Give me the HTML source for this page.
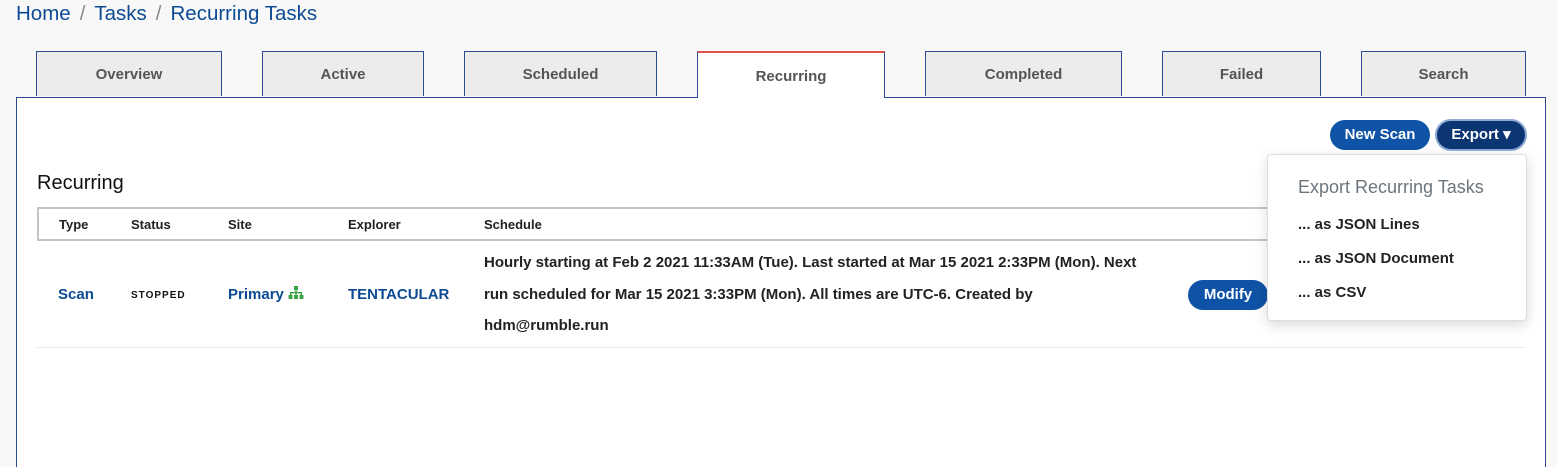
<!DOCTYPE html>
<html><head><style>
html,body{margin:0;width:1557px;height:467px;overflow:hidden}
body{background:#f8f8f8;font-family:"Liberation Sans",sans-serif;position:relative}
.a{position:absolute}
.bc{left:16px;top:2px;font-size:20.5px;color:#0d4a94}
.bc span{color:#888;margin:0 9px}
.tab{position:absolute;top:51px;height:45px;background:#ececec;border:1px solid #2c4b93;border-bottom:none;box-sizing:border-box;font-size:15px;font-weight:bold;color:#555;text-align:center;line-height:46px}
.panel{left:16px;top:97px;width:1530px;height:380px;background:#fff;border:1px solid #2c4b93;box-sizing:border-box}
.btn{position:absolute;border-radius:16px;color:#fff;font-weight:bold;font-size:15px;text-align:center;line-height:30px;height:30px}
.th{position:absolute;top:217px;font-size:13px;font-weight:bold;color:#222}
.td{position:absolute;font-size:14px;font-weight:bold}
</style></head><body>
<div class="a bc">Home<span>/</span>Tasks<span>/</span>Recurring Tasks</div>
<div class="a panel"></div>
<div class="tab" style="left:36px;width:186px">Overview</div>
<div class="tab" style="left:262px;width:162px">Active</div>
<div class="tab" style="left:464px;width:193px">Scheduled</div>
<div class="tab" style="left:697px;width:188px;height:47px;background:#fff;border-top:2px solid #e0524a;border-color:#e0524a #2c4b93 #fff #2c4b93;line-height:48px">Recurring</div>
<div class="tab" style="left:925px;width:197px">Completed</div>
<div class="tab" style="left:1162px;width:159px">Failed</div>
<div class="tab" style="left:1361px;width:165px">Search</div>
<div class="btn" style="left:1330px;top:120px;width:100px;background:#0f53a6">New Scan</div>
<div class="btn" style="left:1435px;top:119px;width:88px;height:28px;line-height:28px;background:#0b3673;border:2px solid #8eabd6">Export ▾</div>
<div class="a" style="left:37px;top:172px;font-size:20px;color:#111">Recurring</div>
<div class="a" style="left:37px;top:207px;width:1488px;height:34px;border:2px solid #c4c4c4;box-sizing:border-box"></div>
<div class="th" style="left:59px">Type</div>
<div class="th" style="left:131px">Status</div>
<div class="th" style="left:228px">Site</div>
<div class="th" style="left:348px">Explorer</div>
<div class="th" style="left:484px">Schedule</div>
<div class="td" style="left:58px;top:286px;color:#0d4a94;font-size:15px">Scan</div>
<div class="td" style="left:131px;top:290px;font-size:10px;letter-spacing:1px;color:#111">STOPPED</div>
<div class="td" style="left:228px;top:286px;color:#0d4a94;font-size:15px">Primary <svg width="16" height="14" viewBox="0 0 16 14" style="vertical-align:-1px"><g fill="#3aa547"><rect x="6" y="0" width="4" height="4"/><rect x="7.3" y="4" width="1.4" height="3"/><rect x="2" y="6" width="12" height="1.4"/><rect x="2" y="6" width="1.4" height="3"/><rect x="7.3" y="6" width="1.4" height="3"/><rect x="12.6" y="6" width="1.4" height="3"/><rect x="0.5" y="9" width="4" height="4"/><rect x="6" y="9" width="4" height="4"/><rect x="11.5" y="9" width="4" height="4"/></g></svg></div>
<div class="td" style="left:348px;top:286px;color:#0d4a94;font-size:15px">TENTACULAR</div>
<div class="td" style="left:484px;top:247px;color:#222;line-height:31.5px;font-size:15px;width:665px">Hourly starting at Feb 2 2021 11:33AM (Tue). Last started at Mar 15 2021 2:33PM (Mon). Next run scheduled for Mar 15 2021 3:33PM (Mon). All times are UTC-6. Created by hdm@rumble.run</div>
<div class="btn" style="left:1188px;top:280px;width:80px;background:#0f53a6">Modify</div>
<div class="a" style="left:37px;top:347px;width:1488px;height:1px;background:#e6e6e6"></div>
<div class="a" style="left:1267px;top:154px;width:258px;height:165px;background:#fff;border:1px solid #ddd;border-radius:4px;box-shadow:0 4px 12px rgba(0,0,0,.15)">
<div class="a" style="left:30px;top:22px;font-size:18px;color:#6c757d">Export Recurring Tasks</div>
<div class="a" style="left:30px;top:61px;font-size:15px;font-weight:bold;color:#222">... as JSON Lines</div>
<div class="a" style="left:30px;top:95px;font-size:15px;font-weight:bold;color:#222">... as JSON Document</div>
<div class="a" style="left:30px;top:129px;font-size:15px;font-weight:bold;color:#222">... as CSV</div>
</div>
</body></html>
